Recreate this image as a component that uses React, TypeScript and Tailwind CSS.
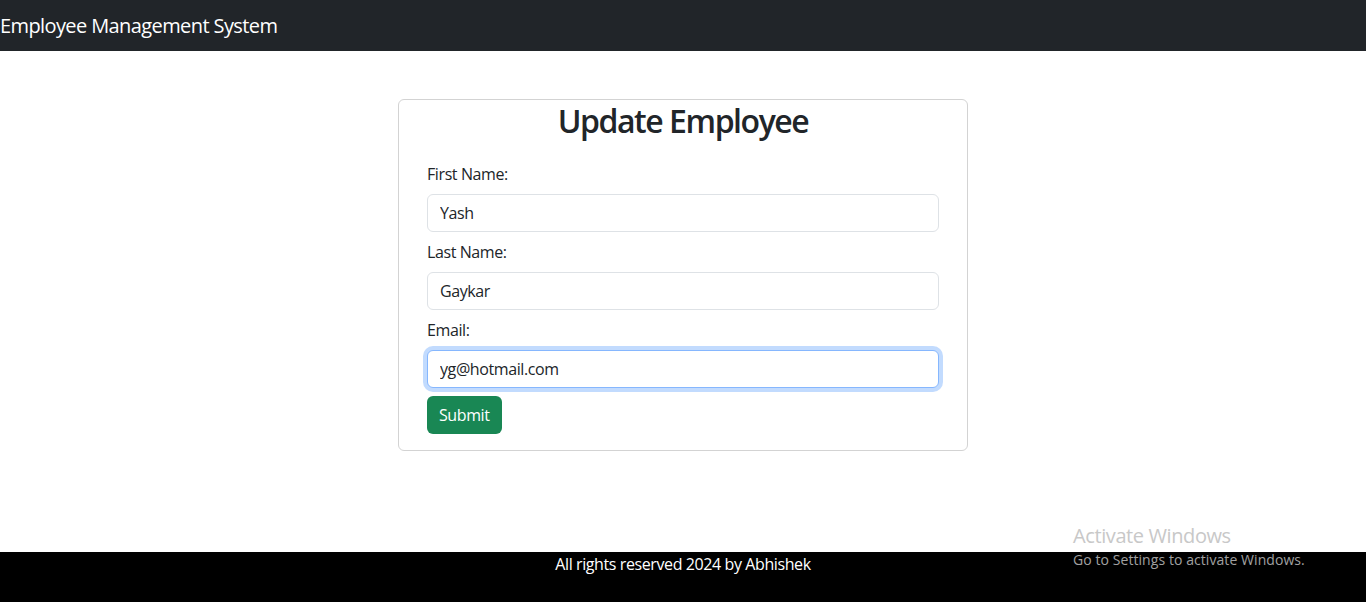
import React, { useState } from 'react';

const font = { fontFamily: '"Open Sans", "Noto Sans", sans-serif' };

const Field: React.FC<{
  label: string;
  value: string;
  onChange: (v: string) => void;
  focused?: boolean;
}> = ({ label, value, onChange, focused }) => (
  <div className="flex flex-col">
    <label className="text-[16px] leading-6 text-[#212529] mb-2">{label}</label>
    <input
      type="text"
      value={value}
      onChange={(e) => onChange(e.target.value)}
      className={`h-[38px] w-full px-3 rounded-md text-[16px] tracking-[-0.025em] text-[#212529] bg-white outline-none border ${
        focused ? 'border-[#86b7fe] shadow-[0_0_0_4px_rgba(13,110,253,0.25)]' : 'border-[#dee2e6]'
      }`}
    />
  </div>
);

const App: React.FC = () => {
  const [firstName, setFirstName] = useState('Yash');
  const [lastName, setLastName] = useState('Gaykar');
  const [email, setEmail] = useState('yg@hotmail.com');

  return (
    <div className="relative h-[602px] flex flex-col bg-white tracking-[-0.025em]" style={font}>
      <nav className="h-[51px] bg-[#212529] flex items-center">
        <span className="text-white text-[20px] leading-none tracking-[-0.03em]">Employee Management System</span>
      </nav>

      <main className="flex-1 flex justify-center pt-12">
        <div className="w-[570px] h-fit border border-[#d3d3d3] rounded-md px-[28px] pb-4">
          <h2 className="text-center text-[32px] font-semibold leading-[38px] tracking-[-0.045em] text-[#212529] pt-[2px]">
            Update Employee
          </h2>
          <form
            className="mt-[22px] flex flex-col gap-2"
            onSubmit={(e) => e.preventDefault()}
          >
            <Field label="First Name:" value={firstName} onChange={setFirstName} />
            <Field label="Last Name:" value={lastName} onChange={setLastName} />
            <Field label="Email:" value={email} onChange={setEmail} focused />
            <div>
              <button
                type="submit"
                className="h-[38px] px-3 rounded-md bg-[#198754] text-white text-[16px] tracking-[-0.025em]"
              >
                Submit
              </button>
            </div>
          </form>
        </div>
      </main>

      <footer className="h-[50px] bg-black text-center text-white text-[16px] leading-6">
        All rights reserved 2024 by Abhishek
      </footer>

      <div className="absolute left-[1073px] top-[524px] pointer-events-none">
        <p className="text-[20px] leading-6 text-[#c8c8c8]">Activate Windows</p>
        <p className="text-[14px] leading-5 tracking-[0.005em] text-[#a0a0a0] mt-[2px]">Go to Settings to activate Windows.</p>
      </div>
    </div>
  );
};

export default App;
